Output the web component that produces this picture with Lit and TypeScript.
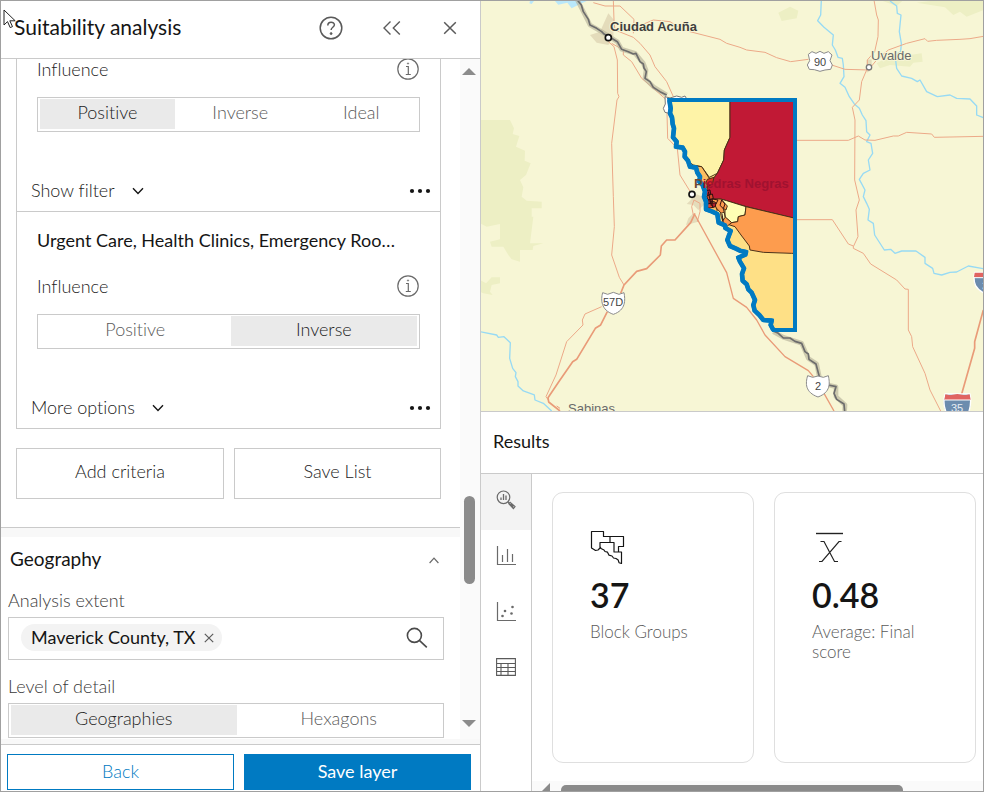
import { LitElement, html, svg, css } from "lit";
import { customElement, property } from "lit/decorators.js";

/* ---------- icons ---------- */
const helpIcon = svg`<svg width="24" height="24" viewBox="0 0 24 24" fill="none" stroke="#5a5a5a" stroke-width="1.5" aria-hidden="true">
  <circle cx="12" cy="12" r="10.8"/><path d="M8.8 9.4c0-4.4 6.6-4.1 6.6-.6 0 2.4-3.3 2.6-3.3 5.2"/><circle cx="12.1" cy="17.6" r="1" fill="#5a5a5a" stroke-width=".8"/></svg>`;
const collapseIcon = svg`<svg width="20" height="16" viewBox="0 0 20 16" fill="none" stroke="#5a5a5a" stroke-width="1.4" aria-hidden="true">
  <path d="M9.500 1.500 3 8l6.500 6.500M18.800 1.500 12.300 8l6.500 6.500"/></svg>`;
const closeIcon = svg`<svg width="14" height="14" viewBox="0 0 14 14" fill="none" stroke="#5a5a5a" stroke-width="1.5" aria-hidden="true">
  <path d="M1.200 1.200 12.800 12.800M12.800 1.200 1.200 12.800"/></svg>`;
const infoIcon = svg`<svg width="22" height="22" viewBox="0 0 22 22" fill="none" stroke="#6a6a6a" stroke-width="1.200" aria-hidden="true">
  <circle cx="11" cy="11" r="10.200"/><path d="M9 8.500h2.300v8M8.800 16.500h5"/><circle cx="11" cy="5.500" r=".7" fill="#6a6a6a" stroke-width=".5"/></svg>`;
const chevronDown = svg`<svg width="12" height="8" viewBox="0 0 12 8" fill="none" stroke="#151515" stroke-width="1.400" aria-hidden="true"><path d="M1 1.200 6 6.400l5-5.200"/></svg>`;
const chevronUp = svg`<svg width="10" height="7" viewBox="0 0 10 7" fill="none" stroke="#6a6a6a" stroke-width="1.200" aria-hidden="true"><path d="M.6 6 5 1.200 9.400 6"/></svg>`;
const dots = svg`<svg width="22" height="6" viewBox="0 0 22 6" fill="#151515" aria-hidden="true"><circle cx="3" cy="3" r="2.100"/><circle cx="11" cy="3" r="2.100"/><circle cx="19" cy="3" r="2.100"/></svg>`;
const removeIcon = svg`<svg width="10" height="10" viewBox="0 0 10 10" stroke="#5a5a5a" stroke-width="1.200" aria-hidden="true"><path d="M.8.8l8.400 8.400M9.200.8.8 9.200"/></svg>`;
const searchIcon = svg`<svg width="22" height="22" viewBox="0 0 22 22" fill="none" stroke="#4a4a4a" stroke-width="1.600" aria-hidden="true"><circle cx="8.400" cy="8.400" r="7"/><path d="M13.400 13.400l7.400 7"/></svg>`;
const exploreIcon = svg`<svg width="20" height="20" viewBox="0 0 20 20" fill="none" stroke="#6a6a6a" stroke-width="1.200" aria-hidden="true">
  <circle cx="7.500" cy="7.300" r="6.300"/><path d="M5 10V7.500M7.500 10V4M10 10V5.500" stroke-width="1.300"/><path d="M11.900 11.900l1.600 1.300"/><path d="M12.800 13.700l1.300-1.400 4.900 4.200-1.600 2zM14.300 14l3 2.800"/></svg>`;
const barsIcon = svg`<svg width="20" height="20" viewBox="0 0 20 20" fill="none" stroke="#6a6a6a" stroke-width="1.200" aria-hidden="true"><path d="M1.500 0v18.500H20M6.500 16V9M11.500 16V3M16.500 16V8"/></svg>`;
const scatterIcon = svg`<svg width="20" height="20" viewBox="0 0 20 20" fill="none" stroke="#6a6a6a" stroke-width="1.200" aria-hidden="true"><path d="M1.500 0v18.500H20"/><g fill="#6a6a6a" stroke="none"><circle cx="6.500" cy="14" r="1.300"/><circle cx="9" cy="9" r="1.300"/><circle cx="15.500" cy="11.500" r="1.300"/><circle cx="16.500" cy="5" r="1.300"/></g></svg>`;
const tableIcon = svg`<svg width="20" height="20" viewBox="0 0 20 20" fill="none" stroke="#5a5a5a" stroke-width="1.100" aria-hidden="true"><path d="M.6.6h18.800v16.800H.6zM.6 5.500h18.800M.6 9.500h18.800M.6 13.500h18.800M5 5.500v12M12 5.500v12"/></svg>`;
const blocksIcon = svg`<svg width="36" height="36" viewBox="0 0 36 36" fill="none" stroke="#151515" stroke-width="1.200" stroke-linejoin="round" aria-hidden="true">
  <path d="M1.500 1.500h12v5h6.500v6H10v5.500L8 20l-2.500.500-1.500-1-2.500-1.500zM20 6.500h13.500v10H28.500v5.500M20 12.500h4V22h7.500v11.500l-2.500-.8-.8-2.700-2.200-1.500-2.500-.5-1.500-2-3-.8-1.500-3-2.500-.7-1-1.500-3-1.500-1.300-2.500"/></svg>`;
const meanIcon = svg`<svg width="36" height="36" viewBox="0 0 36 36" fill="none" stroke="#222" stroke-width="1.400" aria-hidden="true">
  <path d="M4 3.500h27"/><path stroke-width="1.200" d="M8.500 11.500h3.500L22.500 31.500H26M29.500 11.500H27L10 31.500H7"/></svg>`;
const pointer = svg`<svg width="14" height="21" viewBox="0 0 14 21" aria-hidden="true"><path d="M1 1v15l3.500-3.400 2.700 6 2.300-1-2.700-5.800h5.400z" fill="#fff" stroke="#222" stroke-width="1"/></svg>`;

/* ---------- map ---------- */
const river = "M568 300 572 325 570 340 576 352 578 372 582 385 579 412 590 425 588 440 608 443 615 455 614 470 624 482 630 500 648 503 652 518 660 530 658 545 668 555 675 575 672 590 678 605 678 628 695 634 712 642 714 655 716 668 735 676 736 684 752 693 747 706 742 720 750 738 768 746 780 752 798 756 796 764 775 773 780 785 792 805 786 822 788 842 800 853 805 868 815 878 825 900 820 915 824 932 838 945 850 960 875 962 872 975 880 990";
const county = river + " 945 990 945 300Z";

@customElement("suitability-map")
export class SuitabilityMap extends LitElement {
  static styles = css`
    :host { display: block; overflow: hidden; background: #f7f6d5; }
    .canvas { display: block; width: 100%; height: 100%; }
    .label { font-family: "Liberation Sans", Arial, sans-serif; font-size: 13px; }
    .halo { paint-order: stroke; stroke: #f7f6d5; stroke-width: 2px; }
    .shield { font-family: "Liberation Sans", Arial, sans-serif; font-size: 11px; text-anchor: middle; fill: #444; }
    .interstate { fill: #e8eef5; }
  `;
  render() {
    return html`<svg class="canvas" viewBox="481 1 502 410" preserveAspectRatio="xMidYMid slice" role="img" aria-label="Suitability map">
      <defs><clipPath id="county"><path d=${county} /></clipPath></defs>
      <g transform="translate(480 0) scale(.33333)" fill="none" stroke-linejoin="round">
        <g fill="#edefc4">
          <path d="M0 360H90L102 385 98 402 118 408 108 440 135 452 134 482 152 490 138 525 120 540 130 562 125 590 140 602 185 605V625H155V650H160L155 690 150 730H190L160 738 158 750H120V785L95 778 85 765 70 740H35L30 725 60 718V672L20 680 0 670ZM0 840 18 850 35 832H60V850L35 855 30 875 38 885 10 880 0 875Z"/>
          <path d="M895 38 930 20 955 32 950 55 905 63ZM1200 0H1270L1250 18ZM1310 8 1375 0H1510V30L1460 50 1440 35 1420 45 1395 22ZM1190 190 1230 168 1250 175 1290 165 1325 160 1328 185 1300 188 1290 200 1230 195 1200 205Z"/>
        </g>
        <g fill="#e4dcbb">
          <path d="M385 40 402 60 400 110 385 135 350 128 330 105 360 95ZM650 583 668 590 672 615 655 630 640 615 620 612ZM640 640 655 665 618 675 625 655ZM1160 180 1175 178V210L1160 218Z"/>
        </g>
        <path fill="#b9e7fa" d="M148 10 150 3H162L155 12ZM225 3H320L300 12 275 25 262 8 235 14Z"/>
        <!-- rivers -->
        <g stroke="#97daf4" stroke-width="4">
          <path d="M1024 0 1022 45 1013 62 1032 82 1060 105 1057 135 1066 150 1074 172 1087 175 1090 195 1092 230 1080 250 1095 262 1108 290 1123 312 1138 325 1147 345 1158 362 1160 395 1170 405 1160 425 1173 430 1178 460 1165 480 1170 510 1150 520 1138 538 1155 570 1150 590 1160 610 1168 628 1164 660 1180 670 1184 705 1213 750 1232 748 1245 760 1265 753H1308L1335 772V790L1358 805 1362 820 1385 825 1410 817 1430 816 1465 798 1510 806"/>
          <path d="M1230 3 1250 18 1252 40 1263 45 1258 95 1264 130 1262 155 1245 165 1250 205 1265 228 1295 235 1312 245 1320 240 1340 275 1372 290 1410 285 1430 295 1470 297 1490 318V345L1510 353"/>
          <path d="M0 995 50 1005 55 1012 72 1010 91 1028 89 1075 98 1105 108 1118 106 1130 114 1145V1158L130 1173 163 1185 165 1200 190 1210 215 1233"/>
        </g>
        <!-- roads -->
        <g stroke="#eca988" stroke-width="3">
          <path d="M340 8 375 18H420L462 58 460 100M400 0 402 60 405 90 460 112 480 130 510 165 525 200 560 245 580 290M460 85 520 60 570 65 610 90 720 118 740 130 780 142 800 150 855 157 890 173 932 185 985 178M1055 195 1095 208 1165 210 1190 180 1225 150 1280 130 1335 116 1343 124 1370 121 1440 118 1470 116 1510 109M1182 0 1190 45 1195 60 1194 110 1184 155 1162 180V205L1145 245 1138 300 1117 322 1125 360 1124 540 1138 600 1128 630 1134 710 1121 738"/>
          <path d="M385 125 402 140 412 180 413 280 417 290 411 300 395 430 400 590 403 680 395 765 418 832 432 855M395 130 430 150V165L455 185 470 210 485 235 520 265 560 300 563 415 592 445 600 525 640 590M950 421H1105L1135 408 1155 420 1185 421 1240 408 1255 408 1280 397 1355 402 1363 412 1510 409M945 659H1057L1105 732 1120 738V745L1150 760 1172 792 1250 840 1275 867 1285 868V990L1295 1010 1298 1040 1335 1120 1350 1170 1382 1233M365 920 315 942 307 960 309 975 260 1025 228 1125 198 1190 205 1200M640 645 635 620 642 600 660 610V635L652 665"/>
        </g>
        <g stroke="#e99b78" stroke-width="5">
          <path d="M645 640 632 668 585 720H560L544 738 541 765 500 806 470 814 432 855 422 880M382 935 362 975 346 985 290 1078 278 1085 240 1140 204 1193 206 1206 240 1233"/>
          <path stroke-width="4" d="M645 645 740 818 760 895 800 922 830 960 855 1005 915 1070 985 1112 1000 1130M1032 1180 1062 1233"/>
          <path d="M1510 930 1484 1025V1045L1445 1182"/>
          <path stroke-width="3" d="M230 1218 240 1225"/>
        </g>
        <!-- international border -->
        <g stroke="#b7b29a" stroke-width="14" opacity=".65">
          <path d="M292 0 310 35 330 75 365 95 412 125 425 148 465 160 490 190 498 210 495 235 520 260 560 285M880 995 910 1012 965 1030 985 1075 1010 1092 1018 1130M1045 1155 1068 1160V1190L1095 1215 1094 1233"/>
        </g>
        <g stroke="#6c6c6c" stroke-width="5">
          <path d="M292 0 304 15 310 35 325 58 330 75 350 85 365 95 372 102 395 115 412 125 425 148 445 155 460 162 468 160 480 185 490 192 492 204 499 215 495 235 510 245 520 262 540 275 560 285M880 993 895 1000 910 1014 930 1014 945 1024 965 1030 975 1055 985 1062 987 1078 1008 1092 1018 1130M1045 1155 1068 1160 1062 1180 1070 1198 1092 1212 1094 1233"/>
        </g>
        <path fill="#fff" stroke="#777" stroke-width="3" d="M555 290 570 294 590 288 605 292 615 288 622 300 618 312 622 330 608 342 590 338 575 342 555 337 550 325 556 312Z"/>
        <!-- block groups -->
        <g clip-path="url(#county)" stroke="#4b3018" stroke-width="3">
          <path fill="#fee086" d="M560 290H955V1000H560Z"/>
          <path fill="#fef3a7" d="M560 290H750V412L733 450 731 480 712 520 688 532 665 500 640 495 560 440Z"/>
          <path fill="#c11935" d="M750 290H955V658L800 620 725 598 700 597 680 570 684 555 712 520 731 480 733 450 750 412Z"/>
          <path fill="#fcbd60" d="M640 497 665 500 688 535 680 560 672 575 655 560 645 520Z"/>
          <path fill="#ffffb4" d="M722 597 740 602 798 620 795 645 775 650 773 665 755 668 735 652 735 628 722 615Z"/>
          <path fill="#fd9c4e" d="M798 620 955 657V760H935L850 757 810 750 808 738 783 705 765 680 740 672 755 668 773 665 775 650 795 645Z"/>
          <path fill="#fd9c4e" d="M700 597 722 597 742 618 738 630 730 625 735 650 755 668 742 678 728 665 724 640 705 620Z"/>
          <path fill="#ffffb4" d="M722 640 733 637 735 652 730 660 724 652Z"/>
          <path fill="#dc3124" d="M682 538 702 532 697 552 686 558 677 550Z"/>
          <path fill="#fcbd60" d="M685 622 705 615 712 632 700 640Z"/>
          <g stroke="#301010">
            <path fill="#b3202e" d="M678 572 690 570 692 582 682 588Z"/><path fill="#d34a2b" d="M680 588 697 582 700 596 684 600Z"/>
            <path fill="#8c2326" d="M683 600 698 597 697 610 680 612Z"/><path fill="#fd9c4e" d="M697 597 714 600 708 612 697 610Z"/>
            <path fill="#e7442b" d="M681 612 695 610 699 622 684 625Z"/><path fill="#b3202e" d="M695 610 708 608 706 620 699 622Z"/>
            <path fill="#fd9c4e" d="M725 600 735 612 730 626 720 616Z"/><path d="M726 642 730 665M685 575 694 618M690 605H704"/>
          </g>
        </g>
        <path d=${county} stroke="#007ac2" stroke-width="12" stroke-linejoin="miter"/>
        <path d=${river} stroke="#007ac2" stroke-width="14"/>
        <g fill="#fff" stroke="#111" stroke-width="5"><circle cx="385" cy="113" r="9"/><circle cx="636" cy="583" r="9"/></g>
        <circle cx="1167" cy="202" r="8" fill="#fff" stroke="#777" stroke-width="4"/>
        <!-- route shields -->
        <path fill="#fff" stroke="#8a8a8a" stroke-width="3" d="M985 163 996 155 1008 160 1020 154 1032 160 1045 155 1056 165 1050 182 1057 195 1052 208 1035 210 1020 214 1003 209 988 208 982 195 989 182Z"/>
        <g fill="#fff" stroke="#8a8a8a" stroke-width="3">
          <path d="M368 878 383 883 400 877 417 883 432 878C436 900 438 930 400 943 363 930 362 900 368 878Z"/>
          <path d="M983 1127 998 1132 1014 1128 1030 1132 1045 1127C1050 1150 1052 1177 1014 1191 975 1177 976 1150 983 1127Z"/>
        </g>
        <g stroke="#fff" stroke-width="4">
          <path fill="#6c8cae" d="M1395 1182H1470C1476 1210 1470 1225 1465 1240H1400C1390 1220 1389 1205 1395 1182Z"/>
          <path fill="#e06461" stroke="none" d="M1396 1183 1410 1186 1432 1182 1455 1186 1469 1183 1472 1200H1393Z"/>
          <path d="M1393 1200H1472" stroke-width="3"/>
          <path fill="#6c8cae" d="M1484 817H1560V870L1522 884C1485 868 1478 850 1484 817Z"/>
          <path fill="#e06461" stroke="none" d="M1484 818H1560V832H1482Z"/>
          <path d="M1482 833H1560" stroke-width="3"/>
        </g>
      </g>
      <text class="label halo" x="610" y="31" font-weight="700" fill="#3f3f3f">Ciudad Acuña</text>
      <text class="label halo" x="871" y="60" fill="#6a6a6a">Uvalde</text>
      <text class="label halo" x="568" y="413" fill="#6a6a6a">Sabinas</text>
      <text class="label" x="694" y="188" font-weight="700" fill="#a01230"><tspan fill="#6f4a33">P</tspan>iedras Negras</text>
      <text class="shield" x="820" y="66">90</text>
      <text class="shield" x="613" y="306">57D</text>
      <text class="shield" x="818" y="390">2</text>
      <text class="shield interstate" x="957" y="412">35</text>
      <text class="shield interstate" x="985" y="290">3</text>
    </svg>`;
  }
}

/* ---------- segmented control ---------- */
@customElement("segment-group")
export class SegmentGroup extends LitElement {
  @property({ type: Array }) options: string[] = [];
  @property() value = "";
  @property() label = "";
  static styles = css`
    :host { display: block; }
    .group { display: flex; box-sizing: border-box; height: 35px; padding: 1px 2px 2px; margin: 0; border: 1px solid #cacaca; background: #fff; }
    .option { flex: 1 1 auto; display: flex; align-items: center; justify-content: center; padding: 0 20px 4px; font-size: 18px; font-weight: 300; color: #5a5a5a; cursor: pointer; }
    .option:has(input:checked) { background: #eaeaea; color: #222; }
    .radio { position: absolute; opacity: 0; width: 1px; height: 1px; margin: 0; }
  `;
  render() {
    return html`<div class="group" role="radiogroup" aria-label=${this.label}>
      ${this.options.map((o) => html`<label class="option"><input class="radio" type="radio" name="seg" .checked=${o === this.value} />${o}</label>`)}
    </div>`;
  }
}

@customElement("app-root")
export class AppRoot extends LitElement {
  static styles = css`
    :host { display: block; font-family: Lato, "Open Sans", sans-serif; font-size: 18px; font-weight: 300; font-variant-ligatures: none; color: #222; }
    * { box-sizing: border-box; }
    button { font: inherit; font-variant-ligatures: none; color: inherit; background: none; border: 0; padding: 0; cursor: pointer; }
    svg { display: block; }
    h1, h2, h3, p { margin: 0; font-weight: 400; }
    .app { position: relative; display: grid; grid-template-columns: minmax(320px, 480px) minmax(0, 1fr); height: 100vh; border: 1px solid #a0a0a0; background: #fff; overflow: hidden; }
    .pointer { position: absolute; left: 2px; top: 8px; }

    .panel { display: flex; flex-direction: column; min-height: 0; border-right: 1px solid #cacaca; }
    .head { display: flex; align-items: center; height: 58px; flex: none; padding: 0 23px 4px 13px; border-bottom: 1px solid #cacaca; }
    .title { flex: 1; padding-bottom: 3px; font-size: 21px; color: #151515; }
    .tools { display: flex; align-items: center; gap: 38px; }
    .tools .close { margin-left: 4px; }
    .body { display: flex; flex: 1; min-height: 0; overflow: hidden; border-bottom: 5px solid #f8f8f8; }
    .content { flex: 1; min-width: 0; overflow: hidden; }
    .criteria { margin: 0 19px 0 15px; border: 1px solid #cacaca; border-top: 0; }
    .criterion { padding: 0 20px; }
    .criterion + .criterion { border-top: 1px solid #cacaca; }
    .name { padding-top: 14px; font-size: 18px; line-height: 28px; color: #151515; white-space: nowrap; }
    .row { display: flex; align-items: center; justify-content: space-between; height: 20px; margin-bottom: 18px; padding-right: 1px; }
    .name + .row { margin-top: 22px; }
    .more { display: flex; align-items: center; justify-content: space-between; height: 40px; margin: 39px -11px 0 -6px; }
    .toggle { display: flex; align-items: center; gap: 17px; }
    .lift { padding-bottom: 2px; }
    .actions { display: grid; grid-template-columns: 208fr 207fr; gap: 10px; margin: 19px 19px 28px 15px; }
    .outline { height: 51px; padding-bottom: 5px; border: 1px solid #cacaca; }
    .section { border-top: 1px solid #cacaca; }
    .band { height: 9px; background: #f8f8f8; }
    .geo { padding: 0 16px 0 7px; }
    .geo-head { display: flex; align-items: center; justify-content: space-between; height: 46px; padding: 0 5px 0 2px; color: #151515; }
    .geo-title { padding-bottom: 4px; font-size: 19px; }
    .field-label { display: block; line-height: 24px; margin: 5px 0; color: #3a3a3a; }
    .detail { margin-top: 14px; }
    .search { display: flex; align-items: center; height: 43px; padding: 0 15px 2px 12px; border: 1px solid #cacaca; }
    .chip { display: flex; align-items: center; gap: 8px; height: 27px; padding: 0 8px 0 10px; border-radius: 14px; background: #f3f3f3; font-weight: 400; color: #151515; }
    .query { flex: 1; min-width: 0; height: 100%; border: 0; outline: 0; background: none; font: inherit; }
    .vbar { display: flex; flex-direction: column; align-items: center; width: 20px; padding: 9px 2px 12px 0; background: #fafafa; }
    .thumb { width: 11px; height: 88px; border-radius: 6px; background: #8b8b8b; }
    .above { flex: 421; }
    .below { flex: 136; }
    .foot { display: grid; grid-template-columns: 1fr 1fr; gap: 10px; flex: none; padding: 9px 9px 1px 6px; border-top: 1px solid #cacaca; }
    .foot button { height: 36px; padding-bottom: 3px; }
    .foot .back { border: 1px solid #007ac2; color: #007ac2; }
    .foot .save { background: #007ac2; color: #fff; font-weight: 400; }

    .main { display: flex; flex-direction: column; min-width: 0; min-height: 0; }
    .map { flex: 1; min-height: 0; }
    .results { flex: none; border-top: 1px solid #cacaca; }
    .results-title { font-size: 18px; line-height: 58px; height: 62px; padding-left: 12px; color: #151515; border-bottom: 1px solid #cacaca; }
    .results-body { display: flex; }
    .tabs { display: flex; flex-direction: column; width: 51px; border-right: 1px solid #cacaca; }
    .tab { display: flex; align-items: center; justify-content: center; height: 56px; padding-bottom: 4px; }
    .tab.active { background: #f3f3f3; }
    .pane { flex: 1; min-width: 0; display: flex; flex-direction: column; }
    .cards { display: flex; gap: 20px; padding: 18px 7px 18px 20px; }
    .card { flex: 1; min-height: 271px; padding: 37px; border: 1px solid #dfdfdf; border-radius: 11px; }
    .figure { font-size: 34px; line-height: 40px; margin: 9px 0 7px; font-weight: 600; color: #151515; }
    .caption { font-size: 17px; line-height: 20px; font-weight: 300; color: #5a5a5a; }
    .hbar { display: flex; align-items: flex-end; height: 10px; overflow: hidden; padding: 0 80px 0 10px; background: #fafafa; gap: 11px; }
    .hthumb { flex: 1; height: 6px; border-radius: 5px 5px 0 0; background: #8b8b8b; }
  `;

  private criterionFooter(text: string) {
    return html`<div class="more">
      <button class="toggle"><span class="lift">${text}</span>${chevronDown}</button>
      <button aria-label="Options">${dots}</button>
    </div>`;
  }
  private influence(options: string[], value: string) {
    return html`<div class="row"><span>Influence</span><button aria-label="Information">${infoIcon}</button></div>
      <segment-group label="Influence" .options=${options} value=${value}></segment-group>`;
  }

  render() {
    return html`<div class="app">
      <section class="panel">
        <header class="head">
          <h1 class="title">Suitability analysis</h1>
          <div class="tools">
            <button aria-label="Help">${helpIcon}</button>
            <button aria-label="Collapse">${collapseIcon}</button>
            <button class="close" aria-label="Close">${closeIcon}</button>
          </div>
        </header>
        <div class="body">
          <div class="content">
            <div class="criteria">
              <div class="criterion">
                ${this.influence(["Positive", "Inverse", "Ideal"], "Positive")}
                ${this.criterionFooter("Show filter")}
              </div>
              <div class="criterion">
                <h2 class="name">Urgent Care, Health Clinics, Emergency Roo…</h2>
                ${this.influence(["Positive", "Inverse"], "Inverse")}
                ${this.criterionFooter("More options")}
              </div>
            </div>
            <div class="actions">
              <button class="outline">Add criteria</button>
              <button class="outline">Save List</button>
            </div>
            <div class="section">
              <div class="band"></div>
              <div class="geo">
                <div class="geo-head"><h2 class="geo-title">Geography</h2><button aria-label="Collapse section">${chevronUp}</button></div>
                <label class="field-label" for="extent">Analysis extent</label>
                <div class="search">
                  <span class="chip"><span class="lift">Maverick County, TX</span><button aria-label="Remove">${removeIcon}</button></span>
                  <input class="query" id="extent" type="text" />
                  <button aria-label="Search">${searchIcon}</button>
                </div>
                <span class="field-label detail">Level of detail</span>
                <segment-group label="Level of detail" .options=${["Geographies", "Hexagons"]} value="Geographies"></segment-group>
              </div>
            </div>
          </div>
          <div class="vbar" aria-hidden="true">
            <svg width="14" height="7" viewBox="0 0 14 7"><path d="M0 7 7 0l7 7z" fill="#8b8b8b"/></svg>
            <div class="above"></div><div class="thumb"></div><div class="below"></div>
            <svg width="14" height="7" viewBox="0 0 14 7"><path d="M0 0l7 7 7-7z" fill="#8b8b8b"/></svg>
          </div>
        </div>
        <footer class="foot">
          <button class="back">Back</button>
          <button class="save">Save layer</button>
        </footer>
      </section>
      <main class="main">
        <suitability-map class="map"></suitability-map>
        <section class="results">
          <h2 class="results-title">Results</h2>
          <div class="results-body">
            <nav class="tabs">
              <button class="tab active" aria-label="Summary">${exploreIcon}</button>
              <button class="tab" aria-label="Histogram">${barsIcon}</button>
              <button class="tab" aria-label="Scatterplot">${scatterIcon}</button>
              <button class="tab" aria-label="Table">${tableIcon}</button>
            </nav>
            <div class="pane">
              <div class="cards">
                <article class="card">${blocksIcon}<p class="figure">37</p><p class="caption">Block Groups</p></article>
                <article class="card">${meanIcon}<p class="figure">0.48</p><p class="caption">Average: Final score</p></article>
              </div>
              <div class="hbar" aria-hidden="true">
                <svg width="8" height="8" viewBox="0 0 8 8"><path d="M8 0v8H0z" fill="#8b8b8b"/></svg>
                <div class="hthumb"></div>
              </div>
            </div>
          </div>
        </section>
      </main>
      <div class="pointer">${pointer}</div>
    </div>`;
  }
}
